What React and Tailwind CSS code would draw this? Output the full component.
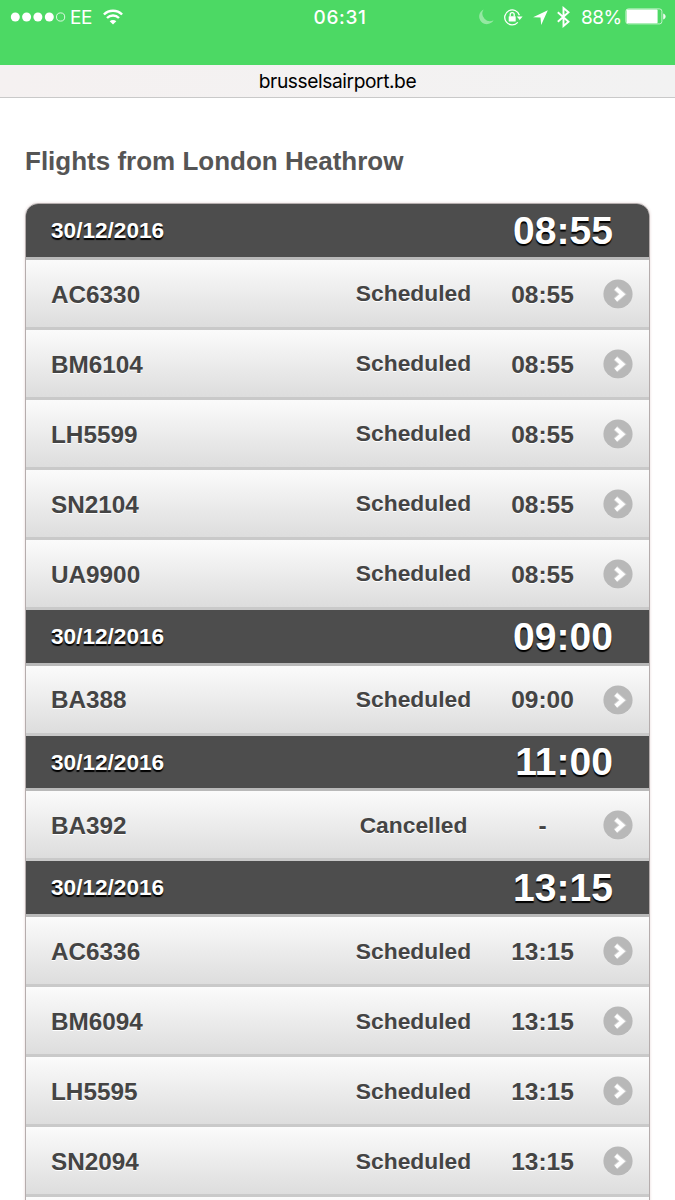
import React from 'react'

const groups = [
    {
        date: '30/12/2016',
        time: '08:55',
        flights: [
            { code: 'AC6330', status: 'Scheduled', time: '08:55' },
            { code: 'BM6104', status: 'Scheduled', time: '08:55' },
            { code: 'LH5599', status: 'Scheduled', time: '08:55' },
            { code: 'SN2104', status: 'Scheduled', time: '08:55' },
            { code: 'UA9900', status: 'Scheduled', time: '08:55' },
        ],
    },
    {
        date: '30/12/2016',
        time: '09:00',
        flights: [{ code: 'BA388', status: 'Scheduled', time: '09:00' }],
    },
    {
        date: '30/12/2016',
        time: '11:00',
        flights: [{ code: 'BA392', status: 'Cancelled', time: '-' }],
    },
    {
        date: '30/12/2016',
        time: '13:15',
        flights: [
            { code: 'AC6336', status: 'Scheduled', time: '13:15' },
            { code: 'BM6094', status: 'Scheduled', time: '13:15' },
            { code: 'LH5595', status: 'Scheduled', time: '13:15' },
            { code: 'SN2094', status: 'Scheduled', time: '13:15' },
            { code: '', status: '', time: '' },
        ],
    },
]

const SignalDots = () => (
    <svg className="w-[56px] h-[12px]" viewBox="0 0 56 12" fill="white">
        <circle cx="5.3" cy="6" r="4.5" />
        <circle cx="16.6" cy="6" r="4.5" />
        <circle cx="27.9" cy="6" r="4.5" />
        <circle cx="39.3" cy="6" r="4.5" />
        <circle cx="50.6" cy="6" r="4.1" fill="none" stroke="white" strokeWidth="0.8" />
    </svg>
)

const WifiIcon = () => (
    <svg className="w-[20px] h-[16px]" viewBox="0 0 20 16" fill="none" stroke="white" strokeWidth="2.4">
        <path d="M0.9 5.5a12.8 12.8 0 0 1 18.2 0" />
        <path d="M4 9a8.4 8.4 0 0 1 12 0" />
        <path d="M10 15.6L6.7 12.3a4.7 4.7 0 0 1 6.6 0z" fill="white" stroke="none" />
    </svg>
)

const MoonIcon = () => (
    <svg className="w-[15px] h-[16px] opacity-40" viewBox="0 0 15 16" fill="white">
        <path d="M4.6 0.5A7.7 7.7 0 1 0 14.6 11.2A7.6 7.6 0 0 1 4.6 0.5z" />
    </svg>
)

const RotationLockIcon = () => (
    <svg className="w-[19px] h-[17px]" viewBox="0 0 19 17" fill="none" stroke="white">
        <path d="M15.4 6.2A7.5 7.5 0 1 0 13.8 13.4" strokeWidth="1.3" />
        <path d="M12.8 7.4h5.8l-2.9 3.5z" fill="white" stroke="none" />
        <rect x="4.7" y="7.2" width="7" height="5.4" rx="0.5" fill="white" stroke="none" />
        <path d="M6.2 7.6V5.6a2 2 0 0 1 4 0v2" strokeWidth="1.3" />
    </svg>
)

const LocationIcon = () => (
    <svg className="w-[15px] h-[15px]" viewBox="0 0 15 15" fill="white">
        <path d="M14.8 0.2L0.1 7.3L7.5 7.6L8.2 15z" />
    </svg>
)

const BluetoothIcon = () => (
    <svg className="w-[13px] h-[22px]" viewBox="0 0 13 22" fill="none" stroke="white" strokeWidth="1.9">
        <path d="M0.8 6.2L11.5 15.8L6.5 20V2L11.5 6.2L0.8 15.8" />
    </svg>
)

const BatteryIcon = () => (
    <svg className="w-[41px] h-[17px]" viewBox="0 0 41 17" fill="white">
        <rect x="0.9" y="0.9" width="36" height="15" rx="2.4" fill="none" stroke="white" strokeOpacity="0.65" strokeWidth="1" />
        <rect x="1.6" y="1.6" width="31" height="13.6" rx="1" />
        <path d="M38.2 5.6c3.2 0.8 3.2 5 0 5.8z" fillOpacity="0.9" />
    </svg>
)

const ArrowIcon = () => (
    <svg className="w-[30px] h-[30px] shrink-0" viewBox="0 0 30 30">
        <circle cx="15" cy="15.8" r="14.2" fill="white" fillOpacity="0.55" />
        <circle cx="15" cy="15" r="14.6" fill="#b8b8b8" />
        <path d="M12.5 9.2L19.4 15.2L12.5 21.2" fill="none" stroke="white" strokeOpacity="0.35" strokeWidth="5.6" />
        <path d="M12.8 9.4L19.4 15.2L12.8 21" fill="none" stroke="white" strokeWidth="3.8" />
    </svg>
)

const StatusBar = () => (
    <div className="h-[65px] bg-[#4cd964] text-white font-['Inter',sans-serif] flex items-start">
        <div className="w-[225px] h-[34px] flex items-center pl-[10px]">
            <SignalDots />
            <span className="text-[19px] leading-[35px] ml-[4px] w-[28px] tracking-[-0.5px]">EE</span>
            <span className="ml-[5px] -mt-[1px]"><WifiIcon /></span>
        </div>
        <div className="w-[225px] h-[34px] text-center text-[19px] leading-[35px] font-medium tracking-[0.6px] pl-[5px]">06:31</div>
        <div className="w-[225px] h-[34px] flex items-center pl-[29px]">
            <MoonIcon />
            <span className="ml-[10px]"><RotationLockIcon /></span>
            <span className="ml-[10px]"><LocationIcon /></span>
            <span className="ml-[9px] -mt-[1px]"><BluetoothIcon /></span>
            <span className="text-[19px] leading-[35px] ml-[11px] w-[41px] tracking-[-0.5px] whitespace-nowrap">88%</span>
            <span className="ml-[3px] -mt-[1px]"><BatteryIcon /></span>
        </div>
    </div>
)

const GroupHeader = ({ date, time }) => (
    <div className="h-[55.8px] bg-[#4d4d4d] border-b-3 border-[#b9b9b9] flex items-center justify-between pl-[25px] pr-[36px] text-white [text-shadow:0_2px_1px_#000]">
        <span className="text-[22.6px] leading-none pt-[2px]">{date}</span>
        <span className="text-[39.1px] leading-none">{time}</span>
    </div>
)

const FlightRow = ({ code, status, time }) => (
    <div className="h-[70px] border-b-3 border-[#c9c9c9] bg-linear-to-b from-[#fbfbfb] to-[#dddddd] flex items-center pl-[25px] pr-[16px] text-[#444444] [text-shadow:0_1px_0_#fff]">
        <span className="grow text-[24.3px] leading-none pt-[3px]">{code}</span>
        <span className="w-[125px] text-center text-[22.8px] leading-none pt-[0.5px]">{status}</span>
        <span className="w-[133px] text-center text-[24.5px] leading-none pt-[3px]">{time}</span>
        <span className="-ml-[6px] pt-[1px]"><ArrowIcon /></span>
    </div>
)

const App = () => {
    return (
        <div className="w-[675px] h-[1200px] bg-white overflow-hidden">
            <StatusBar />
            <div className="h-[33px] bg-linear-to-r from-[#f5f1f1] to-[#f2f2f2] border-b border-[#c9c9c9] text-center text-[19.2px] leading-[33px] tracking-[-0.42px] text-black font-['Inter',sans-serif]">
                brusselsairport.be
            </div>
            <div className="px-[25px] font-['Liberation_Sans',Arial,sans-serif] font-bold">
                <h1 className="pt-[48px] h-[105px] text-[26px] leading-[30px] text-[#555555]">Flights from London Heathrow</h1>
                <div className="border border-[#b5adad] rounded-t-[13px] overflow-hidden shadow-[0_0_3px_#e8d8d8]">
                    {groups.map((group) => (
                        <div key={group.time}>
                            <GroupHeader date={group.date} time={group.time} />
                            {group.flights.map((flight) => (
                                <FlightRow key={flight.code} {...flight} />
                            ))}
                        </div>
                    ))}
                </div>
            </div>
        </div>
    )
}

export default App
